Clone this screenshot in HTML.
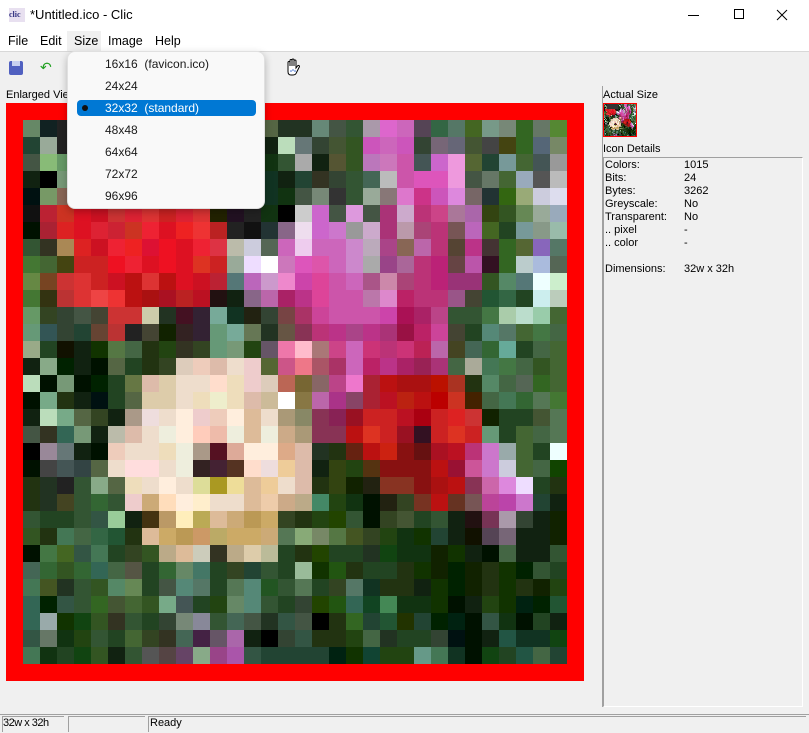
<!DOCTYPE html>
<html><head><meta charset="utf-8"><style>
*{margin:0;padding:0;box-sizing:border-box}
body{width:809px;height:733px;background:#f0f0f0;font-family:"Liberation Sans",sans-serif;font-size:12px;color:#000;position:relative;overflow:hidden}
.abs{position:absolute}
#title{left:0;top:0;width:809px;height:31px;background:#fff}
#menubar{left:0;top:31px;width:809px;height:21px;background:#fff;border-bottom:1px solid #d8d8d8}
.mi{position:absolute;top:3px;font-size:12.5px}
#grid{left:23px;top:120px;width:544px;height:544px;display:grid;grid-template-columns:repeat(32,17px);grid-template-rows:repeat(32,17px)}
#thumb{left:604px;top:104px;width:32px;height:32px;display:grid;grid-template-columns:repeat(32,1px);grid-template-rows:repeat(32,1px)}
.t{position:absolute;font-size:11px;font-family:"Liberation Sans",sans-serif}
#menu{left:67px;top:51px;width:198px;height:158px;background:#f9f9f9;border:1px solid #e0e0e0;border-radius:8px;box-shadow:0 3px 8px rgba(0,0,0,.25)}
.it{position:absolute;left:37px;font-size:12px;color:#1a1a1a}
</style></head><body>
<div id="title" class="abs">
 <div class="abs" style="left:9px;top:8px;width:16px;height:14px;background:#e8e0f0;font:bold 8px 'Liberation Serif',serif;color:#303080;line-height:14px">clic</div>
 <div class="abs" style="left:30px;top:7px;font-size:13px">*Untitled.ico - Clic</div>
 <div class="abs" style="left:688px;top:15px;width:11px;height:1px;background:#000"></div>
 <div class="abs" style="left:734px;top:9px;width:10px;height:10px;border:1px solid #000"></div>
 <svg class="abs" style="left:776px;top:9px" width="12" height="12"><path d="M1 1L11 11M11 1L1 11" stroke="#000" stroke-width="1"/></svg>
</div>
<div id="menubar" class="abs">
 <span class="mi" style="left:8px">File</span><span class="mi" style="left:40px">Edit</span>
 <span class="abs" style="left:67px;top:0;width:34px;height:20px;background:#f0f0f0"></span>
 <span class="mi" style="left:74px">Size</span><span class="mi" style="left:108px">Image</span><span class="mi" style="left:155px">Help</span>
</div>
<div class="abs" style="left:9px;top:61px;width:14px;height:14px;background:#5060c0;border-radius:2px"></div>
<div class="abs" style="left:12px;top:61px;width:8px;height:5px;background:#c8d0f0"></div>
<div class="abs" style="left:40px;top:59px;color:#20a020;font-size:14px">↶</div>
<svg class="abs" style="left:284px;top:58px" width="18" height="19" viewBox="0 0 18 19"><path d="M4 9V4.5a1 1 0 0 1 2 0V8V2.5a1 1 0 0 1 2 0V8V2a1 1 0 0 1 2 0V8V3a1 1 0 0 1 2 0V10l1.5-2a1 1 0 0 1 1.8 1l-2.8 5.5C12 16 11 17 9 17H7c-2 0-3-1.5-3-3.5Z" fill="#fff" stroke="#000" stroke-width="1"/><circle cx="9" cy="12" r=".8" fill="#36c"/><circle cx="7" cy="13" r=".8" fill="#36c"/><circle cx="11" cy="13" r=".8" fill="#36c"/></svg>
<div class="t" style="left:6px;top:89px">Enlarged View</div>
<div class="abs" style="left:6px;top:103px;width:578px;height:578px;background:#f00"></div>
<div id="grid" class="abs"></div>
<div class="abs" style="left:602px;top:86px;width:1px;height:621px;background:#a0a0a0"></div>
<div class="t" style="left:603px;top:89px">Actual Size</div>
<div class="abs" style="left:603px;top:103px;width:34px;height:34px;border:1px solid #f00"></div>
<div id="thumb" class="abs"></div>
<div class="t" style="left:603px;top:143px">Icon Details</div>
<div class="abs" style="left:603px;top:157px;width:200px;height:550px;border-top:1px solid #a0a0a0;border-left:1px solid #a0a0a0;border-right:1px solid #fff;border-bottom:1px solid #fff"></div>
<div class="t" style="left:605px;top:159px;line-height:13px">Colors:<br>Bits:<br>Bytes:<br>Greyscale:<br>Transparent:<br>.. pixel<br>.. color<br><br>Dimensions:</div>
<div class="t" style="left:684px;top:159px;line-height:13px">1015<br>24<br>3262<br>No<br>No<br>-<br>-<br><br>32w x 32h</div>
<div class="abs" style="left:0;top:714px;width:809px;height:1px;background:#a0a0a0"></div>
<div class="abs" style="left:2px;top:716px;width:62px;height:16px;border-top:1px solid #a0a0a0;border-left:1px solid #a0a0a0"></div>
<div class="abs" style="left:68px;top:716px;width:77px;height:16px;border-top:1px solid #a0a0a0;border-left:1px solid #a0a0a0"></div>
<div class="abs" style="left:148px;top:716px;width:658px;height:16px;border-top:1px solid #a0a0a0;border-left:1px solid #a0a0a0"></div>
<div class="t" style="left:3px;top:717px;letter-spacing:-.5px">32w x 32h</div>
<div class="t" style="left:150px;top:717px">Ready</div>
<div id="menu" class="abs">
 <div class="it" style="top:5px">16x16&nbsp; (favicon.ico)</div>
 <div class="it" style="top:27px">24x24</div>
 <div class="abs" style="left:9px;top:48px;width:179px;height:16px;background:#0078d4;border-radius:4px"></div>
 <div class="abs" style="left:14px;top:53px;width:6px;height:6px;background:#111;border-radius:50%"></div>
 <div class="it" style="top:49px;color:#fff">32x32&nbsp; (standard)</div>
 <div class="it" style="top:71px">48x48</div>
 <div class="it" style="top:93px">64x64</div>
 <div class="it" style="top:115px">72x72</div>
 <div class="it" style="top:137px">96x96</div>
</div>
<script>
var Q1=[
"686 122 222 333 333 333 333 333 333 333 333 333 333 333 564 232",
"243 9a9 222 333 333 333 333 333 333 333 333 333 333 333 121 bdb",
"454 8b7 696 333 333 333 333 333 333 333 333 333 333 333 131 353",
"121 000 797 333 333 333 333 333 333 333 333 333 333 333 132 121",
"011 796 865 333 333 333 333 333 333 333 333 333 333 333 132 131",
"111 b23 c32 d12 c12 c33 d23 d33 c22 d23 d33 220 212 222 131 000",
"010 a23 d22 d12 d23 c23 c32 e23 d12 e22 e33 b22 222 111 233 868",
"353 332 a85 d22 c12 e23 e22 d13 e12 d12 e23 d34 bba ccd 565 c6b",
"473 463 441 c22 c22 e12 e23 d12 e12 d12 d32 c22 9a9 edf fff c7b",
"684 742 c33 d33 c22 c12 b11 d33 b11 d12 c12 b23 577 b6b c9c e8c",
"473 331 b33 d33 e44 e33 b11 a11 a12 b22 b12 211 121 868 b6a a26",
"696 342 343 454 443 c33 c33 cca 232 412 323 7a9 132 221 343 744",
"697 355 343 243 643 b33 222 443 120 322 323 697 7a9 675 232 654",
"9a8 242 110 121 130 574 464 231 241 332 342 697 797 241 656 e7a",
"121 8a8 020 121 010 564 242 231 342 dcb ecb dba edc ecc 563 c58",
"bdb 010 797 010 020 242 674 dba dca edc edc fdc edb ecc dcb b65"];
var Q2=[
"232 687 454 353 a9a d6c c6b 545 364 576 462 798 787 362 676 583",
"677 343 453 352 c5b c6b c5b 343 767 667 453 444 441 362 567 786",
"aaa 121 553 352 b7b c7b c5a 455 c6c e9d 563 243 799 463 455 999",
"243 332 343 353 465 bbb c5a d5b d5b e9d 454 676 463 9ab 555 bbb",
"454 787 333 353 9a9 877 d7c c38 c5b d8d 766 233 361 9a7 ccd dde",
"ccc c6c 454 d9d 454 a37 cac b37 c48 a79 a6a 341 352 685 9a9 9ab",
"ede c6c c7c 999 cac a37 b9a a47 b37 755 b6b 462 242 799 898 9ba",
"ece c6b c6b c8c bab a48 865 b6a b37 543 b38 433 362 563 86b 576",
"d5b d5a c6b c8c aaa 948 a69 b37 b27 644 b5a 312 362 bcc abd 565",
"c4a d49 c5a c6b a58 c8a a47 b37 b27 937 937 352 586 577 eff cec",
"b38 d49 c5a c5a b7a d8c b26 b37 b37 958 443 253 364 242 cee bcb",
"a36 c49 c5a c5a c5a c4a a15 a26 b48 353 353 474 aca bdc 9ca 463",
"835 b37 b38 a48 b38 a37 914 b26 c49 443 242 587 576 463 474 464",
"fbc a77 c48 c6b c37 b37 c37 b25 b6a 442 465 363 6a9 242 464 463",
"e78 a56 a36 c6b b26 b38 a26 925 a37 464 aa9 475 474 464 352 463",
"763 866 b48 e7c a23 b11 a11 a11 b10 a32 231 586 464 565 362 463"];
var Q3=[
"010 7a8 231 121 011 242 564 dca dca edc edb eec edb dba cb9 fff",
"121 bdb 7a8 564 342 121 a98 edd edc fed ecc ecb fed db9 edc a97",
"454 332 365 797 121 bba dba edc eed fed fcb eba eed db9 eed ca8",
"000 989 677 121 010 ecb edc edc edb eed a98 512 da9 fed fed da8",
"010 444 455 344 564 edc fdd fdd edc eed 322 423 532 fdc edd ec9",
"231 232 222 353 8a8 564 edb edc fed edc dd9 a92 ed9 db9 ec9 edc",
"231 232 442 353 363 353 ecc ca7 fdb fed fec edc edc db9 eca ca8",
"353 242 242 353 354 9c9 121 431 b96 feb ba5 db9 ca7 b95 ca6 342",
"352 231 475 464 364 253 231 db9 ca6 b95 c96 ba6 ca6 ca6 ca7 575",
"010 474 462 354 475 242 342 352 ba8 db9 ccb 332 ba8 dca bb9 242",
"465 363 352 363 365 464 554 242 363 686 476 242 342 243 353 242",
"475 452 232 353 352 586 685 242 454 587 576 242 575 587 252 353",
"365 020 354 353 362 453 463 352 7a8 455 242 241 686 587 353 242",
"365 9aa 130 141 352 332 353 242 343 787 889 353 465 454 232 354",
"354 676 131 241 353 242 463 342 332 465 424 656 a6a 121 000 343",
"475 131 242 141 352 121 353 555 544 646 8a8 948 a5a 354 243 243"];
var Q4=[
"874 b6a a38 846 a23 b12 b21 b11 b00 c32 420 464 475 363 575 473",
"886 835 825 912 c22 c22 b12 a01 c22 d22 c33 120 242 242 453 575",
"a97 835 835 b11 d32 c22 912 312 c22 d32 c22 697 242 463 464 575",
"dba 232 231 621 b11 c21 811 611 a12 b12 b37 c7c 9aa 463 242 eff",
"dba 121 341 241 531 811 811 811 b11 913 c59 c7c ccd 463 464 140",
"dba 231 341 120 221 832 832 811 a11 b11 835 c6a d8d edf 242 231",
"ba8 486 241 131 010 221 342 732 b11 632 755 b49 b4a c7c 243 121",
"231 241 240 353 010 342 453 242 353 121 211 735 a9a 343 121 120",
"8a7 786 574 452 342 241 131 130 243 121 110 545 767 121 121 120",
"231 240 242 242 232 141 131 131 120 130 121 010 464 121 121 353",
"9b9 130 251 231 242 242 231 130 120 020 120 231 130 020 353 242",
"575 242 342 576 132 231 231 121 130 020 120 231 130 231 120 241",
"343 240 251 365 142 485 131 131 130 010 121 241 130 021 020 253",
"454 000 231 362 243 253 230 243 020 021 010 354 131 010 242 121",
"354 231 231 241 464 232 242 242 343 011 010 121 254 132 132 141",
"243 243 021 130 143 241 241 698 475 132 010 141 242 254 464 243"];
function row(r){var a,b;if(r<16){a=Q1[r];b=Q2[r]}else{a=Q3[r-16];b=Q4[r-16]}return (a+" "+b).split(" ")}
var g=document.getElementById("grid"),t=document.getElementById("thumb"),h="";
for(var r=0;r<32;r++){var c=row(r);for(var i=0;i<32;i++){h+='<div style="background:#'+c[i]+'"></div>';}}
g.innerHTML=h;t.innerHTML=h;
</script>
</body></html>
